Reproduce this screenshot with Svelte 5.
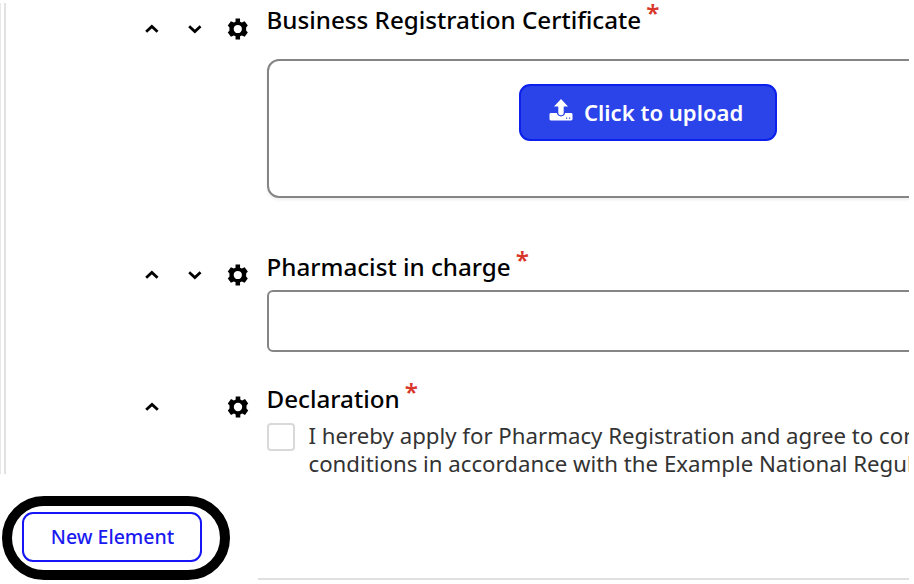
<script>
  const rows = [
    { kind: 'upload', label: 'Business Registration Certificate', down: true },
    { kind: 'text', label: 'Pharmacist in charge', down: true },
    { kind: 'check', label: 'Declaration', down: false }
  ];
</script>

{#snippet chevron(down)}
  <svg class="chevron" class:down width="16" height="12" viewBox="0 0 16 12">
    <path d="M2.2 8.8 8 3.4l5.800 5.400" fill="none" stroke="#000" stroke-width="2.8" />
  </svg>
{/snippet}

<div class="page">
  <div class="form">
    {#each rows as row}
      <div class="row {row.kind}">
        <div class="controls">
          {@render chevron(false)}
          {#if row.down}{@render chevron(true)}{/if}
          <svg class="gear" width="22" height="22" viewBox="0 0 22 22">
            <path
              fill-rule="evenodd"
              d="M8.700.4h4.600v3.100l1.800.9L18 3.100l3.200 4.400-1.700 2v3l1.700 2-3.200 4.400-2.900-1.300-1.800.9v3.100H8.700v-3.100l-1.800-.9L4 18.900.8 14.500l1.700-2v-3l-1.700-2L4 3.100l2.900 1.300 1.800-.9zM11 6.800a4.200 4.200 0 1 0 0 8.400 4.200 4.200 0 0 0 0-8.400z"
            />
          </svg>
        </div>
        <div class="field">
          <div class="label"><span class="name">{row.label}</span><span class="star">*</span></div>
          {#if row.kind === 'upload'}
            <div class="drop">
              <button class="primary">
                <svg width="24" height="22" viewBox="0 0 24 22" fill="#fff">
                  <path d="M12 0 19 7.400h-4.300v6.200a2.700 2.700 0 0 1-5.400 0V7.400H5z" />
                  <path
                    fill-rule="evenodd"
                    d="M1.800 14.100h6.100a4.200 4.200 0 0 0 8.200 0h6.100q1.300 0 1.300 1.300v4.700q0 1.400-1.300 1.400H1.800q-1.300 0-1.300-1.400v-4.700q0-1.300 1.300-1.300zM17 18.500v1.200h1.200v-1.200zm3 0v1.200h1.200v-1.200z"
                  />
                </svg>
                <span>Click to upload</span>
              </button>
            </div>
          {:else if row.kind === 'text'}
            <div class="input"></div>
          {:else}
            <div class="agree">
              <span class="box"></span>
              <p>I hereby apply for Pharmacy Registration and agree to comply<br />conditions in accordance with the Example National Regulations</p>
            </div>
          {/if}
        </div>
      </div>
    {/each}
  </div>
  <div class="footer">
    <div class="highlight"><button class="outline">New Element</button></div>
    <div class="rule"></div>
  </div>
</div>

<style>
  :global(body) { background: #fff; }
  .page {
    display: flow-root;
    width: 909px;
    height: 584px;
    overflow: hidden;
    font-family: 'Noto Sans', sans-serif;
    color: #000;
  }
  .form {
    box-sizing: border-box;
    height: 471px;
    margin-top: 3px;
    margin-left: 4px;
    border-left: 2px solid #e2e2e2;
    box-shadow: -3px 0 0 #fff, -4px 0 0 #e8e8e8;
    padding-left: 138px;
  }
  .row { display: flex; }
  .row.upload { height: 246.5px; }
  .row.text { height: 132px; }
  .controls {
    display: flex;
    width: 122.500px;
    flex: none;
    padding-top: 14.500px;
    height: 22px;
    align-items: center;
  }
  .chevron { margin-right: 27px; }
  .chevron.down { transform: rotate(180deg); margin-right: 24.500px; }
  .gear { margin-left: auto; margin-right: 18px; }
  .chevron.down + .gear { margin-left: 0; }
  .field { width: 720px; flex: none; }
  .label {
    display: flex;
    height: 34px;
    line-height: 34px;
    font-size: 24.200px;
    font-weight: 500;
    white-space: nowrap;
  }
  .star {
    color: #d9362b;
    margin-left: 5px;
    position: relative;
    top: -7px;
    font-weight: 600;
  }
  .drop {
    box-sizing: border-box;
    height: 139px;
    margin-top: 22px;
    border: 2px solid #858585;
    border-radius: 12px;
    padding: 22.500px 0 0 250.500px;
    box-shadow: 0 2px 3px #0001;
  }
  button { font-family: inherit; box-sizing: border-box; }
  .primary {
    display: flex;
    align-items: center;
    width: 258px;
    height: 57.500px;
    padding: 0 0 0 28px;
    gap: 11px;
    border: 2px solid #0b20ed;
    border-radius: 11px;
    background: #2b44ea;
    color: #fff;
    font-size: 22.100px;
    font-weight: 620;
    white-space: nowrap;
  }
  .primary svg { margin-top: -5px; }
  .input {
    box-sizing: border-box;
    height: 62px;
    margin-top: 6.500px;
    border: 2px solid #858585;
    border-radius: 6px;
  }
  .agree { display: flex; padding-top: 6px; }
  .box {
    box-sizing: border-box;
    width: 28px;
    height: 28px;
    margin-top: 1px;
    flex: none;
    border: 2px solid #d9d9d9;
    border-radius: 4px;
  }
  p {
    margin: 0 0 0 14px;
    font-size: 22.220px;
    line-height: 28px;
    color: #333;
    white-space: nowrap;
  }
  .footer { display: flex; height: 110px; }
  .highlight {
    box-sizing: border-box;
    width: 228px;
    height: 84px;
    margin: 22px 0 0 2px;
    border: 10px solid #000;
    border-radius: 42px;
    padding: 6px 0 0 10px;
    flex: none;
  }
  .outline {
    display: block;
    width: 180px;
    height: 50px;
    padding: 0 0 1px 1px;
    border: 2px solid #1515f5;
    border-radius: 11px;
    background: #fff;
    color: #1a1af0;
    font-size: 19.500px;
    font-weight: 500;
  }
  .rule { flex: 1; height: 2px; margin: 104px 0 0 28px; background: #e0e0e0; }
</style>
